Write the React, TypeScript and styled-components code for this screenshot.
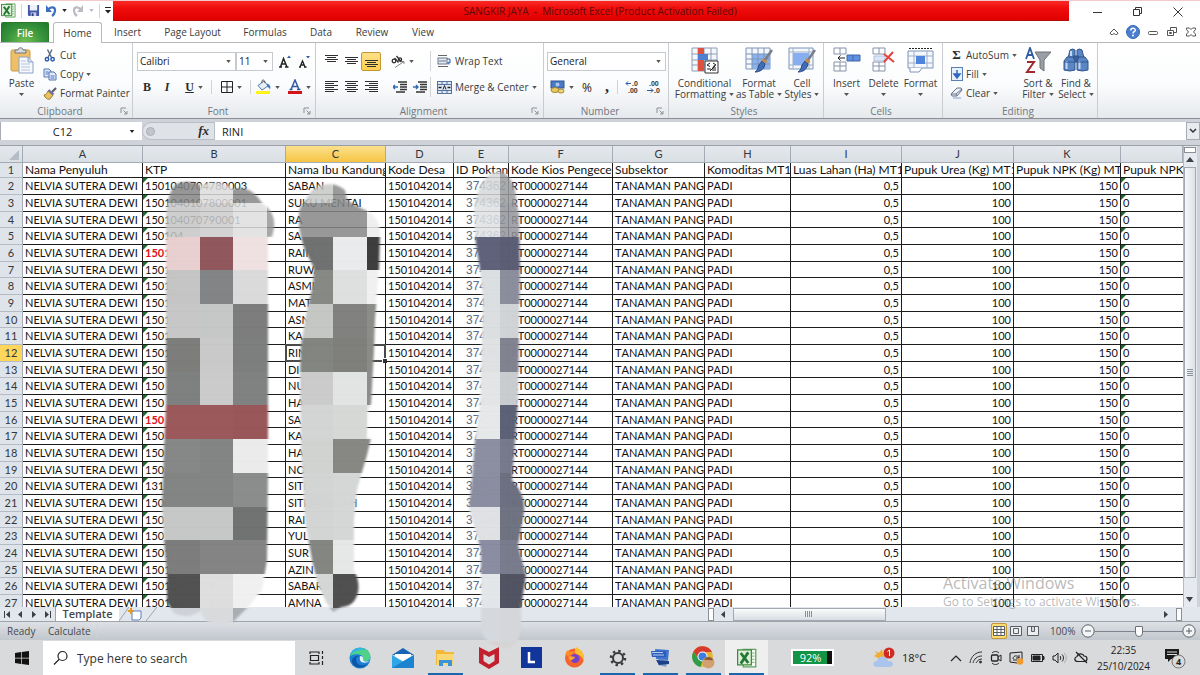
import React from 'react';
import styled, { createGlobalStyle, css } from 'styled-components';

const ui = '"Open Sans", "Noto Sans", sans-serif';
const sheetFont = 'Lato, "Open Sans", sans-serif';

const Global = createGlobalStyle`
  * { box-sizing: border-box; }
  body { margin: 0; background: #fff; font-family: ${ui}; font-size: 10px; color: #3b3b3b; overflow: hidden; }
  button, input, select { font: inherit; color: inherit; margin: 0; padding: 0; border: 0; background: none; outline: none; }
  svg { display: block; flex: none; }
`;

const Page = styled.div`
  position: relative;
  display: flex;
  flex-direction: column;
  height: 100vh;
`;

/* ---------- Title bar ---------- */
const TitleBar = styled.header`
  display: flex;
  align-items: flex-start;
  height: 22px;
  background: #fff;
  border-top: 1px solid #f3c9cc;
`;
const QuickAccess = styled.div`
  display: flex;
  align-items: center;
  width: 113px;
  height: 19px;
  padding-left: 1px;
  gap: 5px;
`;
const IconButton = styled.button`
  display: flex;
  align-items: center;
  justify-content: center;
  flex: none;
`;
const Title = styled.div`
  flex: 1;
  height: 20px;
  line-height: 20px;
  text-align: center;
  white-space: pre;
  color: #5c0a0a;
  padding-left: 18px;
  background: linear-gradient(#fb2a26, #ee0d0b 40%, #e00000);
  border-bottom: 1px solid #b40d0d;
`;
const WindowButtons = styled.div`
  display: flex;
  align-items: center;
  height: 22px;
  width: 131px;
  padding-left: 9px;
`;
const WindowButton = styled(IconButton)`
  width: 40px;
  height: 22px;
`;

/* ---------- Ribbon tabs ---------- */
const TabRow = styled.nav`
  display: flex;
  align-items: stretch;
  height: 21px;
  border-bottom: 1px solid #b6babf;
`;
const FileTab = styled.button`
  width: 48px;
  && {
    margin-left: 1px;
    border-radius: 2px 2px 0 0;
    border: 1px solid #2a7a2c;
    border-bottom: 0;
    color: #fff;
    font-weight: 600;
    background: radial-gradient(ellipse at 50% 100%, #6fc04f, #35913a 60%, #1e7a2c);
  }
`;
const Tab = styled.button<{ $w: number; $active?: boolean }>`
  width: ${p => p.$w}px;
  ${p => p.$active && css`
    && {
      margin: 0 0 -1px 4px;
      background: #fff;
      border: 1px solid #b6babf;
      border-bottom: 0;
      border-radius: 3px 3px 0 0;
    }
  `}
`;
const TabTools = styled.div`
  display: flex;
  align-items: center;
  gap: 7px;
  margin-left: auto;
  padding-right: 3px;
`;

/* ---------- Ribbon ---------- */
const Ribbon = styled.section`
  display: flex;
  height: 76px;
  background: linear-gradient(#fff, #fbfcfd 55%, #e6e9ed);
  border-bottom: 1px solid #8b9097;
`;
const Group = styled.div<{ $w: number }>`
  display: flex;
  flex-direction: column;
  width: ${p => p.$w}px;
  height: 75px;
  border-right: 1px solid #c9cdd2;
`;
const GroupBody = styled.div<{ $gap?: number; $pad?: number }>`
  display: flex;
  flex: 1;
  gap: ${p => p.$gap ?? 0}px;
  padding-left: ${p => p.$pad ?? 0}px;
`;
const GroupLabel = styled.div`
  display: flex;
  align-items: center;
  height: 14px;
  line-height: 14px;
  color: #6f7780;
  padding-right: 4px;
  span { flex: 1; text-align: center; }
`;
const Stack = styled.div`
  display: flex;
  flex-direction: column;
  gap: 3px;
  padding-top: 4px;
`;
const Lines = styled.div`
  display: flex;
  flex-direction: column;
  gap: 6px;
  padding-top: 8px;
`;
const Line = styled.div<{ $gap?: number }>`
  display: flex;
  align-items: center;
  height: 20px;
  gap: ${p => p.$gap ?? 0}px;
`;
const SmallButton = styled.button`
  display: flex;
  align-items: center;
  height: 16px;
  gap: 3px;
  white-space: nowrap;
`;
const Slot = styled.span<{ $w: number }>`
  display: flex;
  justify-content: center;
  width: ${p => p.$w}px;
`;
const BigButton = styled.button<{ $w: number }>`
  display: flex;
  flex-direction: column;
  align-items: center;
  width: ${p => p.$w}px;
  && { padding-top: 4px; line-height: 11px; }
  white-space: nowrap;
  svg + span { margin-top: 4px; }
`;
const Row = styled.span`
  display: flex;
  align-items: center;
  gap: 3px;
`;
const Tool = styled.button<{ $w?: number; $on?: boolean; $at?: 'top' | 'bottom' }>`
  display: flex;
  align-items: ${p => (p.$at === 'top' ? 'flex-start' : p.$at === 'bottom' ? 'flex-end' : 'center')};
  justify-content: center;
  gap: 4px;
  width: ${p => p.$w ?? 20}px;
  height: 19px;
  && { padding: ${p => (p.$at ? '3px 0 2px' : '0')}; }
  ${p => p.$on && css`
    && {
      border: 1px solid #c2972f;
      border-radius: 2px;
      background: linear-gradient(#fbe08a, #fdd052);
    }
  `}
`;
const Gap = styled.span`
  width: 9px;
`;
const VRule = styled.span<{ $h?: number }>`
  width: 1px;
  height: ${p => p.$h ?? 14}px;
  background: #d0d3d7;
`;
const SelectBox = styled.label<{ $w: number }>`
  position: relative;
  display: flex;
  align-items: center;
  width: ${p => p.$w}px;
  height: 19px;
  border: 1px solid #c6c9ce;
  background: #fff;
  select { appearance: none; width: 100%; height: 17px; padding-left: 2px; color: #222; }
  svg { position: absolute; right: 4px; pointer-events: none; }
`;
const Glyph = styled.span<{ $size?: number; $i?: boolean; $u?: boolean }>`
  font-family: "Liberation Serif", serif;
  font-size: ${p => p.$size ?? 12}px;
  line-height: 14px;
  color: #2b2b2b;
  font-weight: 700;
  font-style: ${p => (p.$i ? 'italic' : 'normal')};
  text-decoration: ${p => (p.$u ? 'underline' : 'none')};
`;
const Percent = styled.span`
  font-size: 12px;
  color: #222;
`;

/* ---------- Formula bar ---------- */
const FormulaBar = styled.section`
  display: flex;
  height: 26px;
  padding: 3px 0 5px;
  background: #cfd3d9;
  font-size: 11px;
`;
const NameBox = styled.label`
  position: relative;
  display: flex;
  align-items: center;
  width: 142px;
  background: #fff;
  border-left: 1px solid #a8adb4;
  input { width: 123px; text-align: center; color: #222; height: 17px; }
  svg { position: absolute; right: 7px; }
`;
const FxZone = styled.div`
  display: flex;
  align-items: center;
  justify-content: space-between;
  width: 73px;
  padding: 0 5px 0 3px;
  background: #dfe2e7;
  border: 1px solid #b9bdc4;
  border-radius: 9px 0 0 9px;
`;
const FormulaInput = styled.input`
  flex: 1;
  min-width: 0;
  height: 18px;
  && { background: #fff; color: #222; padding-left: 7px; }
`;
const Expand = styled(IconButton)`
  && { width: 14px; border: 1px solid #a8adb4; background: #e8ebef; }
`;

/* ---------- Sheet ---------- */
const SheetArea = styled.main`
  display: flex;
  flex: 1;
  min-height: 0;
  border-top: 1px solid #9a9ea5;
  background: #dfe3e8;
`;
const GridClip = styled.div`
  flex: 1;
  min-width: 0;
  overflow: hidden;
  background: #fff;
`;
const Grid = styled.table`
  width: 100%;
  table-layout: fixed;
  border-collapse: separate;
  border-spacing: 0;
  font-family: ${sheetFont};
  font-size: 11px;
  line-height: 14px;
  color: #111;
`;
const ColHead = styled.th<{ $on?: boolean }>`
  height: 17px;
  padding: 0;
  font-weight: 400;
  color: #33373c;
  border-right: 1px solid #a3abb5;
  border-bottom: 1px solid #a3abb5;
  background: ${p => (p.$on ? 'linear-gradient(#fbe08c, #f6c544)' : 'linear-gradient(#e4e8ed, #dadfe5)')};
`;
const Corner = styled(ColHead)`
  svg { margin: 2px 3px 0 auto; }
`;
const RowHead = styled.th<{ $on?: boolean }>`
  padding: 0;
  font-weight: 400;
  color: #33373c;
  background: ${p => (p.$on ? '#ffd65c' : '#dfe4ea')};
  border-right: 1px solid #a3abb5;
  border-bottom: 1px solid #b4bbc4;
`;
const GridRow = styled.tr`
  height: 17px;
  &:nth-child(3n + 1) { height: 16px; }
  &:first-child { height: 15px; }
`;
const Cell = styled.td<{ $right?: boolean; $flag?: boolean; $red?: boolean; $code?: boolean; $open?: boolean; $big?: boolean; $loose?: boolean }>`
  position: relative;
  padding: 0 2px;
  white-space: nowrap;
  overflow: hidden;
  text-align: ${p => (p.$right ? 'right' : 'left')};
  border-right: ${p => (p.$open ? '0' : '1px solid #1c1c1c')};
  border-bottom: 1px solid #1c1c1c;
  ${p => p.$big && css`font-size: 12px;`}
  ${p => p.$loose && css`font-kerning: none;`}
  ${p => p.$flag && css`background: linear-gradient(135deg, #1a6b2b 3px, transparent 4px);`}
  ${p => p.$red && css`color: #e01020; font-weight: 700;`}
  ${p => p.$code && css`font-family: "Liberation Sans", sans-serif; font-size: 12px; color: #5b6a83;`}
`;
const ActiveCell = styled(Cell)`
  overflow: visible;
  &::before { content: ''; position: absolute; inset: -1px; border: 2px solid #4a4a4a; }
  &::after { content: ''; position: absolute; right: -3px; bottom: -3px; width: 4px; height: 4px; background: #333; border: 1px solid #fff; }
`;
const VScroll = styled.div`
  display: flex;
  flex-direction: column;
  align-items: center;
  width: 17px;
  padding: 1px 2px 4px 0;
  border-left: 1px solid #b4bac2;
  border-right: 3px solid #cfd3d9;
  background: #e6eaf0;
`;
const SplitHandle = styled.span<{ $v?: boolean }>`
  width: ${p => (p.$v ? 6 : 12)}px;
  height: ${p => (p.$v ? 13 : 6)}px;
  border: 1px solid #8b9097;
  background: #fff;
  flex: none;
`;
const VThumb = styled.div`
  display: flex;
  align-items: center;
  justify-content: center;
  flex: 1;
  width: 12px;
  margin-bottom: 18px;
  border: 1px solid #a3a9b2;
  background: linear-gradient(90deg, #f6f8fa, #dde1e7);
`;

/* ---------- Sheet tabs ---------- */
const SheetTabs = styled.div`
  display: flex;
  align-items: center;
  height: 15px;
  background: #e2e7ee;
  border-bottom: 1px solid #9fa4ab;
`;
const NavButtons = styled.div`
  display: flex;
  align-items: center;
  justify-content: space-between;
  width: 55px;
  padding: 0 4px;
`;
const SheetTab = styled.button`
  && {
    width: 64px;
    height: 14px;
    line-height: 14px;
    background: #fff;
    border-left: 1px solid #9fa4ab;
    font-weight: 600;
    font-size: 11px;
    color: #45494e;
  }
`;
const HScroll = styled.div`
  display: flex;
  align-items: center;
  gap: 6px;
  margin-left: auto;
  width: 41%;
  padding-right: 18px;
`;
const HTrack = styled.div`
  display: flex;
  flex: 1;
  height: 13px;
`;
const HThumb = styled.div`
  display: flex;
  align-items: center;
  justify-content: center;
  width: 36%;
  border: 1px solid #a3a9b2;
  background: linear-gradient(#fafbfc, #d9dde3);
`;

/* ---------- Status bar ---------- */
const StatusBar = styled.footer`
  display: flex;
  align-items: center;
  height: 18px;
  padding-left: 7px;
  background: linear-gradient(#dde1e6, #c2c7cd);
  color: #45494e;
`;
const StatusItem = styled.span<{ $w: number }>`
  width: ${p => p.$w}px;
`;
const ViewTools = styled.div`
  display: flex;
  align-items: center;
  gap: 1px;
  margin-left: auto;
`;
const ViewButton = styled.button<{ $on?: boolean }>`
  && {
    display: flex;
    align-items: center;
    justify-content: center;
    width: 16px;
    height: 16px;
    border-radius: 2px;
    ${p => p.$on && css`border: 1px solid #c2972f; background: #fddc74;`}
  }
`;
const Zoom = styled.label`
  display: flex;
  align-items: center;
  margin-left: 8px;
  padding-right: 4px;
  span { width: 31px; }
`;
const ZoomRange = styled.input`
  appearance: none;
  width: 87px;
  height: 14px;
  && { background: linear-gradient(#7e848b, #7e848b) center / 100% 1px no-repeat; }
  &::-webkit-slider-thumb {
    appearance: none;
    width: 8px;
    height: 11px;
    border: 1px solid #6a7078;
    border-radius: 1px 1px 4px 4px;
    background: #fff;
  }
`;

/* ---------- Task bar ---------- */
const TaskBar = styled.footer`
  display: flex;
  align-items: stretch;
  height: 35px;
  background: #d9dadb;
  color: #222;
`;
const StartButton = styled(IconButton)`
  width: 43px;
`;
const SearchBox = styled.label`
  display: flex;
  align-items: center;
  gap: 8px;
  width: 252px;
  margin-top: 1px;
  padding-left: 10px;
  background: #fff;
  font-size: 12px;
  input { width: 180px; }
  input::placeholder { color: #333; opacity: 1; }
`;
const TaskButton = styled.button<{ $open?: boolean; $active?: boolean }>`
  && {
    position: relative;
    display: flex;
    align-items: center;
    justify-content: center;
    width: 43px;
    background: ${p => (p.$active ? '#efefef' : 'transparent')};
  }
  ${p => p.$open && css`
    &::after { content: ''; position: absolute; left: 4px; right: 4px; bottom: 0; height: 2px; background: #1d66ad; }
  `}
`;
const Battery = styled.div`
  align-self: center;
  width: 43px;
  height: 17px;
  margin-left: 23px;
  padding: 0 4px 0 0;
  font-size: 11px;
  line-height: 13px;
  border: 2px solid #fff;
  background: linear-gradient(90deg, #129447 34px, #111 34px);
  color: #fff;
  text-align: center;
`;
const Tray = styled.div`
  display: flex;
  align-items: center;
  margin-left: auto;
  padding-right: 14px;
`;
const Weather = styled.button`
  && {
    display: flex;
    align-items: center;
    gap: 6px;
    width: 78px;
    font-size: 11px;
    white-space: nowrap;
  }
`;
const TrayIcons = styled.div`
  display: flex;
  align-items: center;
  gap: 7px;
  margin-right: 8px;
`;
const Clock = styled.div`
  display: flex;
  flex-direction: column;
  align-items: center;
  width: 53px;
  line-height: 16px;
  margin-right: 14px;
`;

/* ---------- Overlays ---------- */
const Watermark = styled.div`
  position: absolute;
  right: 49px;
  bottom: 64px;
  width: 208px;
  color: rgba(140, 140, 140, 0.62);
  white-space: nowrap;
  pointer-events: none;
  font-size: 12px;
  line-height: 18px;
  strong { display: block; font-weight: 400; font-size: 16px; line-height: 20px; }
`;
const Censor = styled.svg`
  position: absolute;
  left: 0;
  top: 0;
  pointer-events: none;
`;

/* ---------- Icons ---------- */
const Caret = ({ c = '#555', s = 5 }: { c?: string; s?: number }) => (
  <svg width={s} height="3" viewBox="0 0 6 4"><path d="M0 0h6L3 4z" fill={c} /></svg>
);
const Drop = () => <svg width="5" height="9"><path d="M0 4h5L2.500 7z" fill="#555" /></svg>;
const Launcher = () => (
  <svg width="8" height="8" viewBox="0 0 8 8" fill="none" stroke="#8b9097"><path d="M1 6V1h5M3.500 3.500 7 7M7 4v3H4" /></svg>
);
const ExcelIcon = ({ s = 15 }: { s?: number }) => (
  <svg width={s} height={s} viewBox="0 0 16 16">
    <path d="M5 1h10v14H5z" fill="#f6fbf3" stroke="#5fa35c" />
    <path d="M10 4h4M10 6.500h4M10 9h4M10 11.500h4" stroke="#8cc48a" fill="none" />
    <rect x=".5" y="1.500" width="11" height="12" fill="#dff0d8" stroke="#3c8a3f" />
    <path d="M3 4l6 8M9 3.500L3 12.500" stroke="#237a34" strokeWidth="2.200" />
  </svg>
);
const SaveIcon = () => (
  <svg width="13" height="13" viewBox="0 0 14 14">
    <path d="M1 1h12v12H2L1 12z" fill="#4257a8" /><rect x="3" y="1" width="8" height="6" fill="#eef1fa" />
    <rect x="4" y="9" width="6" height="4" fill="#c7cde6" /><rect x="5" y="10" width="2" height="3" fill="#2a3978" />
  </svg>
);
const UndoIcon = ({ c, flip }: { c: string; flip?: boolean }) => (
  <svg width="12" height="13" viewBox="0 0 12 13"><g transform={flip ? 'matrix(-1 0 0 1 12 0)' : undefined}>
    <path d="M3 5.500C6 2 10.500 3 10 7c-.3 2.500-1.500 4-3 5" fill="none" stroke={c} strokeWidth="2.200" />
    <path d="M1 1v7h6z" fill={c} /></g>
  </svg>
);
const PasteIcon = () => (
  <svg width="24" height="27" viewBox="0 0 24 27">
    <rect x="1" y="3" width="19" height="21" rx="1.500" fill="#eebf66" stroke="#c9994a" />
    <path d="M5 3h3c0-3 5-3 5 0h3v3H5z" fill="#d7dade" stroke="#72777e" />
    <path d="M9 10h9l5 5v11H9z" fill="#f5f8fd" stroke="#8fa3c4" /><path d="M18 10v5h5" fill="#cfdcef" stroke="#8fa3c4" />
    <path d="M11 14h5M11 17h9M11 20h9M11 23h9" stroke="#b4c3dc" />
  </svg>
);
const CutIcon = () => (
  <svg width="12" height="13" viewBox="0 0 12 13" fill="none">
    <path d="M3.500.5l4 8M8 .5l-4 8" stroke="#5f6a7a" strokeWidth="1.400" />
    <circle cx="3" cy="10.300" r="1.700" stroke="#2f5fb0" strokeWidth="1.500" /><circle cx="8.600" cy="10.300" r="1.700" stroke="#2f5fb0" strokeWidth="1.500" />
  </svg>
);
const CopyIcon = () => (
  <svg width="14" height="13" viewBox="0 0 14 13" stroke="#5577b5" fill="#dfeafb">
    <path d="M1 1h5l2 2v6H1z" /><path d="M6 4h5l2 2v6H6z" /><path d="M2.500 4h3M2.500 6h3M7.500 8h4M7.500 10h4" />
  </svg>
);
const BrushIcon = () => (
  <svg width="14" height="13" viewBox="0 0 14 13">
    <path d="M13 1L9 5" stroke="#5c5c6a" strokeWidth="2.200" /><path d="M5 4l5 4-3 4c-2 1-5-1-6-4 2 0 3-2 4-4z" fill="#e9c25e" stroke="#9a7a2c" /><path d="M5.500 3l5 4.500" stroke="#6a6fa0" strokeWidth="2.200" />
  </svg>
);
const BordersIcon = () => (
  <svg width="12" height="12" viewBox="0 0 12 12" fill="none" stroke="#222"><path d="M.5.5h11v11H.5zM6 0v12M0 6h12" /></svg>
);
const FillColor = () => (
  <svg width="15" height="16" viewBox="0 0 15 16">
    <path d="M2 6.500l6-4.500 4 5-6 4z" fill="#e8eef8" stroke="#5577a8" /><path d="M6 4C5 0 9 0 9 4" fill="none" stroke="#555" /><path d="M11 4.500c3 1 4 3 3 6-1-2-2-2.500-3-3z" fill="#3a76c4" />
    <rect x="0" y="12" width="14" height="3" fill="#fdf21a" />
  </svg>
);
const FontColor = () => (
  <svg width="14" height="16" viewBox="0 0 14 16"><path d="M3 10.500L7 1l4 9.500M4.500 7.500h5M1.500 10.500h3M9 10.500h3.500" fill="none" stroke="#2f5ba3" strokeWidth="1.500" /><rect x="0" y="12" width="14" height="3" fill="#d51217" /></svg>
);
const AlignIcon = ({ kind }: { kind: 'left' | 'center' | 'right' | 'v' }) => {
  const n = kind === 'v' ? [0, 1, 0, 1] : [0, 1, 0, 1, 0, 1];
  return (
    <svg width="13" height={n.length * 2} viewBox={`0 0 13 ${n.length * 2}`} stroke="#2f2f2f">
      {n.map((short, i) => {
        const a = short ? (kind === 'left' ? 0 : kind === 'right' ? 4 : 2) : 0;
        const b = short ? (kind === 'left' ? 9 : kind === 'right' ? 13 : 11) : 13;
        return <path key={i} d={`M${a} ${i * 2 + 0.5}H${b}`} />;
      })}
    </svg>
  );
};
const IndentIcon = ({ flip }: { flip?: boolean }) => (
  <svg width="14" height="12" viewBox="0 0 14 12" fill="none">
    <path d="M5 1h9M7 3.500h7M7 6h7M7 8.500h7M3 11h9" stroke="#333" strokeWidth="1.300" />
    <path d={flip ? 'M0 6h5M3 4l2 2-2 2' : 'M5 6H0M2 4L0 6l2 2'} stroke="#2f6bb5" strokeWidth="1.400" />
  </svg>
);
const OrientIcon = () => (
  <svg width="14" height="13" viewBox="0 0 14 13" fill="none" stroke="#333" strokeWidth="1.300"><circle cx="3" cy="6" r="1.800" /><path d="M3.500 3l4 4.500M5.500 1l5 6" /><circle cx="9" cy="4.500" r="1.600" /><path d="M4 12.500l9-6M10.500 6.500H13V9" stroke="#888" strokeWidth="1" /></svg>
);
const WrapIcon = () => (
  <svg width="15" height="14" viewBox="0 0 15 14" fill="none"><path d="M1 1.500h9M1 12.500h10" stroke="#666" /><rect x="1" y="4" width="9" height="6" fill="#e4eaf2" stroke="#6b7788" /><path d="M2 7h7" stroke="#6b7788" /><path d="M10 5h3v4h-2M12 7.500L10.500 9 12 10.500" stroke="#2f5ba3" /></svg>
);
const MergeIcon = () => (
  <svg width="15" height="13" viewBox="0 0 15 13"><rect x=".5" y=".5" width="14" height="12" fill="#dfe9f7" stroke="#56739d" /><path d="M1 3.500h13M1 9.500h13M5 1v2M10 1v2M5 10v2M10 10v2" stroke="#56739d" /><path d="M1.500 6.500h3M13.500 6.500h-3" stroke="#222" strokeWidth="1.500" /><path d="M6 8.500l1.500-4L9 8.500" fill="none" stroke="#222" /></svg>
);
const MoneyIcon = () => (
  <svg width="15" height="14" viewBox="0 0 15 14"><rect x="1" y="1" width="13" height="7" fill="#4a79c4" stroke="#2f5596" /><circle cx="7.500" cy="4.500" r="2" fill="#a8c5ef" /><ellipse cx="5" cy="10" rx="4" ry="2.500" fill="#e9cb62" stroke="#a6842c" /><ellipse cx="11" cy="11" rx="3" ry="2" fill="#f0d77d" stroke="#a6842c" /></svg>
);
const DecimalIcon = ({ more }: { more?: boolean }) => (
  <svg width="14" height="14" viewBox="0 0 14 14" fontFamily="Liberation Sans, sans-serif" fontWeight="700" fontSize="7" fill="#333">
    <text x={more ? 7 : 2} y="6">{more ? '.0' : '.00'}</text><text x={more ? 3 : 7} y="13">{more ? '.00' : '.0'}</text>
    <path d={more ? 'M6 3.500H1M3 1.500L1 3.500l2 2' : 'M0 10.500h6M4 8.500l2 2-2 2'} stroke="#2f5ba3" fill="none" />
  </svg>
);
const Canvas = ({ children }: { children: React.ReactNode }) => (
  <svg width="28" height="27" viewBox="0 0 28 27" fill="none">{children}</svg>
);
const CondIcon = () => (
  <Canvas>
    <path d="M1 1h25v23H1z" fill="#f4f7fb" stroke="#8e9db3" /><path d="M7 1v23M13 1v23M20 1v23M1 7h25M1 13h25M1 18h25" stroke="#8e9db3" />
    <path d="M7 1h6v6H7zM7 13h6v11H7z" fill="#e0503f" /><path d="M7 7h10v6H7z" fill="#4e7fd0" />
    <path d="M14 14h13v12H14z" fill="#fff" stroke="#333" /><path d="M19 16l-3 2 3 1.500M16 22h4M22 16l3 2-3 1.500M21 21h4M21 23h4M24 19l-5 5" stroke="#222" />
  </Canvas>
);
const Brush = () => (
  <g><path d="M27 3L20 13" stroke="#787e88" strokeWidth="2.600" /><path d="M17 14l3 3-1 3c-2 4-6 5-9 5 3-2 3-4 4-7z" fill="#3f6db8" stroke="#2b4b83" /><path d="M17.500 12.500l4 3" stroke="#c08a4c" strokeWidth="3" /></g>
);
const TableIcon = () => (
  <Canvas><path d="M1 1h24v21H1z" fill="#f4f7fb" stroke="#7d94b8" /><path d="M7 7h18v15H7z" fill="#8bb2ef" /><path d="M7 1v21M13 1v21M19 1v21M1 7h24M1 12h24M1 17h24" stroke="#7d94b8" /><Brush /></Canvas>
);
const StylesIcon = () => (
  <Canvas><path d="M1 1h24v21H1z" fill="#f4f7fb" stroke="#7d94b8" /><path d="M5 1v21M21 1v21M1 5h24M1 18h24" stroke="#9fb0ca" /><path d="M5 6h16v12H5z" fill="#86aef0" /><Brush /></Canvas>
);
const InsertIcon = () => (
  <Canvas><path d="M1 1h12v6H1zM7 1v6M1 15h12v9H1zM7 15v9M1 19h12" fill="#fff" stroke="#8492a8" /><path d="M14 8h13v6H14z" fill="#5e8fe0" stroke="#3f66a8" /><path d="M20 8v6" stroke="#3f66a8" /><path d="M12 11H5M7.500 8.500L5 11l2.500 2.500" stroke="#222" /></Canvas>
);
const DeleteIcon = () => (
  <Canvas><path d="M3 1h12v6H3zM9 1v6M3 15h12v9H3zM9 15v9M3 19h12" fill="#fff" stroke="#8492a8" /><path d="M4 9h11v5H4z" fill="#dbe6f8" stroke="#b2c2dd" /><path d="M14 7l10 8M23 5l-9 10" stroke="#e2433d" strokeWidth="2" /></Canvas>
);
const FormatIcon = () => (
  <Canvas><path d="M2 1.500h23" stroke="#222" strokeDasharray="2 1" /><path d="M1 4h25v17H1z" fill="#f4f7fb" stroke="#7d94b8" /><path d="M7 4v17M20 4v17M1 9h25M1 16h25" stroke="#9fb0ca" /><path d="M9 9h9v8H9z" fill="#4f84dd" /><path d="M3 21v4h9l3-4" stroke="#7d94b8" fill="#fff" /></Canvas>
);
const FillIcon = () => (
  <svg width="12" height="14" viewBox="0 0 12 14"><rect x=".5" y=".5" width="11" height="13" fill="#e8f0fc" stroke="#5a7fb8" /><path d="M6 3v6M3 7l3 4 3-4z" stroke="#2f67c0" fill="#2f67c0" strokeWidth="1.500" /></svg>
);
const EraserIcon = () => (
  <svg width="13" height="12" viewBox="0 0 13 12"><path d="M7 1h4l1 2-5 6H2L1 7z" fill="#eef2f8" stroke="#66738a" /><path d="M1 7h5l6-5M6 7l1 2" fill="none" stroke="#66738a" /><path d="M3 11h8" stroke="#7da0d6" /></svg>
);
const SortIcon = () => (
  <svg width="26" height="27" viewBox="0 0 26 27" fill="none"><path d="M10 5h16l-7 8v11l-4-3v-8z" fill="#9a9fa6" stroke="#6d7279" /><path d="M1 12L5 1l4 11M2.500 8h5" stroke="#2f5ba3" strokeWidth="1.800" /><path d="M2 15h7L2 25h8" stroke="#9c2b30" strokeWidth="2" /></svg>
);
const FindIcon = () => (
  <svg width="26" height="27" viewBox="0 0 26 27" fill="#5a86c4" stroke="#2f5590">
    <path d="M7 3q2.500-2 5 0v8H5z" /><path d="M14 3q2.500-2 5 0l2 8h-7z" />
    <path d="M10.500 9h5v6h-5z" fill="#3a5f96" />
    <path d="M1 14l3-4h6l2 4v9q-5 2-11 0z" /><path d="M14 14l2-4h6l3 4v9q-6 2-11 0z" />
    <path d="M3.500 14v8M16.500 14v8M8 4v5" stroke="#c3d8f4" strokeWidth="2" />
    <path d="M1 15h11M14 15h11" stroke="#2f5590" />
  </svg>
);
const Tri = ({ d }: { d: string }) => <svg width="7" height="7" viewBox="0 0 7 7"><path d={d} fill="#3c4046" /></svg>;

/* ---------- Data ---------- */
const columns: [string, number | undefined][] = [
  ['A', 120], ['B', 143], ['C', 100], ['D', 68], ['E', 55], ['F', 104],
  ['G', 92], ['H', 86], ['I', 111], ['J', 112], ['K', 107], ['', undefined],
];
const headings = ['Nama Penyuluh', 'KTP', 'Nama Ibu Kandung', 'Kode Desa', 'ID Poktan', 'Kode Kios Pengecer', 'Subsektor', 'Komoditas MT1', 'Luas Lahan (Ha) MT1', 'Pupuk Urea (Kg) MT1', 'Pupuk NPK (Kg) MT1', 'Pupuk NPK'];
const people: [string, string][] = [
  ['1501040704780003', 'SABAN'], ['1501040107800001', 'SUKU MENTAI'], ['150104070790001', 'RA'], ['150104', 'SA'],
  ['1501', 'RAIN'], ['1501', 'RUWA'], ['1501', 'ASMI'], ['1501', 'MAT'], ['1501', 'ASN'], ['1501', 'KA'],
  ['1501', 'RINI'], ['150', 'DI'], ['150', 'NU'], ['150', 'HA'], ['150', 'SA'], ['150', 'KA'], ['150', 'HA'],
  ['150', 'NO'], ['131', 'SITI'], ['150', 'SITI FATIMAH'], ['150', 'RAI'], ['150', 'YUL'], ['1501', 'SUR'],
  ['1501', 'AZIN'], ['15010401019', 'SABARIAH'], ['1501040107650009', 'AMNA'],
];

/* Mosaic tiles: one row of colours per 34px band, starting at y=169. */
const strokes = [
  {
    id: 'b',
    x: [150, 200, 233, 267, 280],
    path: 'M176 184Q188 179 200 185Q218 178 234 189Q250 184 262 203Q276 212 274 228L272 237H268V475L267 560L262 590L250 605L240 615L233 622Q218 628 205 620L200 611Q188 620 174 613L167 602V575L164 540L162 506L164 450L166 405V230Q165 195 176 184Z',
    tiles: [
      ['#858585', '#dcdcdc', '#868686', '#999'], ['#c6c6c6', '#cbcbcb', '#dedede', '#989898'], ['#e8cfcf', '#8f565a', '#efe1e2', '#efe1e2'],
      ['#c4c4c4', '#828384', '#dadada', '#dadada'], ['#c6c6c6', '#c5c6c6', '#7b7b7b', '#7b7b7b'], ['#7b7b7a', '#c8c8c8', '#7b7c7c', '#7b7c7c'],
      ['#7d7e7e', '#cacaca', '#7e7f7f', '#7e7f7f'], ['#9b5759', '#9b5759', '#985558', '#985558'], ['#858686', '#828383', '#ebebeb', '#ebebeb'],
      ['#828383', '#828383', '#8a8b8b', '#8a8b8b'], ['#c5c7c6', '#c5c7c6', '#6f7070', '#6f7070'], ['#7a7b7a', '#838383', '#838383', '#838383'],
      ['#505050', '#dedede', '#f0f0f0', '#f0f0f0'], ['#cdd0d4', '#d8dadc', '#a9adb3', '#a9adb3'],
    ],
  },
  {
    id: 'c',
    x: [290, 333, 367, 390],
    path: 'M312 190Q330 178 345 190L347 200L357 206L367 211Q378 216 380 230L379 268L375 320L374 350L371 405L368 410L367 438H371L367 455L362 472L357 490L354 520V570Q360 582 358 592Q355 606 342 607L333 612L326 602L318 585L312 560L305 520L301 450L300 375L301 345L306 315L313 285L314 268L305 250Q296 225 300 208Z',
    tiles: [
      ['#c6c8c5', '#8a8a8a', '#eee'], ['#858685', '#868686', '#ececec'], ['#6e6f6f', '#e9ebec', '#3c3c3c'],
      ['#858883', '#dedfdf', '#f0f0f0'], ['#c3c6c3', '#7f817d', '#8a8c88'], ['#82847f', '#7d7e79', '#888a85'],
      ['#c9cac9', '#e2e3e3', '#8b8b8b'], ['#d2d3d3', '#d5d8d5', '#e5e5e5'], ['#d0d2d0', '#868782', '#868782'],
      ['#d2d4d3', '#d5d7d6', '#ddd'], ['#d2d5d4', '#d5d7d6', '#ddd'], ['#838581', '#e6e8e7', '#ddd'],
      ['#d5d7d6', '#4e4e4e', '#4e4e4e'], ['#a9adb3', '#a9adb3', '#a9adb3'],
    ],
  },
  {
    id: 'e',
    x: [460, 500, 533],
    path: 'M480 186Q488 172 500 171Q516 178 516 200L519 215L520 270L518 400L515 440L512 480Q526 495 524 512L518 545L526 575L521 607V630Q518 648 504 648Q484 644 481 630V550L469 508L472 480L475 440L480 405L483 300L480 270L475 236L474 205Z',
    tiles: [
      ['#d5d7d8', '#9a9b9e'], ['#dfe1e3', '#93949a'], ['#5d6078', '#595c73'], ['#dcdfe1', '#8a8d9c'], ['#dcdfe1', '#d0d3d6'],
      ['#dfe1e3', '#7f828f'], ['#e3e5e6', '#c9ccce'], ['#e6e8e9', '#5c6074'], ['#8b8ea0', '#74788a'], ['#8a8da0', '#6b6e7e'],
      ['#dfe1e4', '#6e7180'], ['#8a8da1', '#777a8b'], ['#e3e7ea', '#505261'], ['#d5d8dc', '#d3d6da'], ['#d8cfd0', '#d5d5d6'],
    ],
  },
];
const bandTop = (i: number) => 169 + Math.round(i * 33.75);

const App = () => (
  <Page>
    <Global />
    <TitleBar>
      <QuickAccess>
        <ExcelIcon />
        <VRule />
        <IconButton aria-label="Save"><SaveIcon /></IconButton>
        <IconButton aria-label="Undo"><UndoIcon c="#3f6fc0" /></IconButton>
        <Caret c="#222" />
        <IconButton aria-label="Redo"><UndoIcon c="#b9bcc0" flip /></IconButton>
        <Caret c="#b9bcc0" />
        <VRule />
        <IconButton aria-label="Customize toolbar"><svg width="6" height="7" viewBox="0 0 6 7"><path d="M0 .5h6" stroke="#222" /><path d="M0 3h6L3 6.500z" fill="#222" /></svg></IconButton>
      </QuickAccess>
      <Title>{'SANGKIR JAYA  -  Microsoft Excel (Product Activation Failed)'}</Title>
      <WindowButtons>
        <WindowButton aria-label="Minimize"><svg width="10" height="10" stroke="#333"><path d="M0 5.500h9" /></svg></WindowButton>
        <WindowButton aria-label="Restore"><svg width="10" height="10" fill="none" stroke="#333"><path d="M.5 2.500h6v6h-6zM2.500 2.500v-2h6v6h-2" /></svg></WindowButton>
        <WindowButton aria-label="Close"><svg width="10" height="10" stroke="#333"><path d="M.5.5l9 9M9.500.5l-9 9" /></svg></WindowButton>
      </WindowButtons>
    </TitleBar>

    <TabRow>
      <FileTab>File</FileTab>
      <Tab $w={49} $active>Home</Tab>
      <Tab $w={51}>Insert</Tab>
      <Tab $w={79}>Page Layout</Tab>
      <Tab $w={66}>Formulas</Tab>
      <Tab $w={46}>Data</Tab>
      <Tab $w={56}>Review</Tab>
      <Tab $w={46}>View</Tab>
      <TabTools>
        <IconButton aria-label="Collapse ribbon"><svg width="10" height="8" fill="none" stroke="#555"><path d="M1 5l4-4 4 4-1 1.500H6.500L5 5.500 3.500 6.500H2z" /></svg></IconButton>
        <IconButton aria-label="Help">
          <svg width="14" height="14" viewBox="0 0 14 14"><circle cx="7" cy="7" r="6.500" fill="#4a7fd0" stroke="#3566b4" /><path d="M4.800 5.500c0-3 4.500-2.800 4.500-.3C9.300 6.800 7 6.700 7 8.500" fill="none" stroke="#fff" strokeWidth="1.500" /><circle cx="7" cy="10.500" r="1" fill="#fff" /></svg>
        </IconButton>
        <IconButton aria-label="Minimize workbook"><svg width="12" height="8" fill="none" stroke="#555"><rect x="1.500" y="3.500" width="9" height="3" rx="1" /></svg></IconButton>
        <IconButton aria-label="Restore workbook"><svg width="12" height="10" fill="none" stroke="#555"><path d="M4.500 3V.5h6v5H8M1.500 3.500h6v5h-6zM3.500 5.500h2v1h-2z" /></svg></IconButton>
        <IconButton aria-label="Close workbook"><svg width="12" height="10" fill="none" stroke="#555"><path d="M1.500 1h3L6 2.500 7.500 1h3v1.500L8.500 5l2 2v2h-3L6 7.500 4.500 9h-3V7l2-2-2-2.500z" /></svg></IconButton>
      </TabTools>
    </TabRow>

    <Ribbon>
      <Group $w={133}>
        <GroupBody>
          <BigButton $w={43}><PasteIcon /><span>Paste</span><Drop /></BigButton>
          <Stack>
            <SmallButton><Slot $w={14}><CutIcon /></Slot>Cut</SmallButton>
            <SmallButton><Slot $w={14}><CopyIcon /></Slot>Copy <Caret /></SmallButton>
            <SmallButton><Slot $w={14}><BrushIcon /></Slot>Format Painter</SmallButton>
          </Stack>
        </GroupBody>
        <GroupLabel><span>Clipboard</span><Launcher /></GroupLabel>
      </Group>
      <Group $w={183}>
        <GroupBody $pad={4}>
          <Lines>
            <Line>
              <SelectBox $w={99}><select aria-label="Font"><option>Calibri</option></select><Caret /></SelectBox>
              <SelectBox $w={37}><select aria-label="Font size"><option>11</option></select><Caret /></SelectBox>
              <Tool aria-label="Grow font" $w={22}>
                <svg width="13" height="13" viewBox="0 0 13 13"><path d="M1 12h3M7 12h3.500M2.500 12L5.500 3.500 9 12M4 9h4" fill="none" stroke="#222" strokeWidth="1.500" /><path d="M9 3h4L11 .5z" fill="#2f5ba3" /></svg>
              </Tool>
              <Tool aria-label="Shrink font" $w={18}>
                <svg width="12" height="13" viewBox="0 0 12 13"><path d="M1 12h2M6 12h2.500M2 12l2.500-6L7 12M3 10h3" fill="none" stroke="#222" strokeWidth="1.300" /><path d="M8 1h4l-2 2.500z" fill="#2f5ba3" /></svg>
              </Tool>
            </Line>
            <Line>
              <Tool aria-label="Bold"><Glyph>B</Glyph></Tool>
              <Tool aria-label="Italic"><Glyph $i>I</Glyph></Tool>
              <Tool aria-label="Underline" $w={34}><Glyph $u>U</Glyph><Caret /></Tool>
              <VRule />
              <Tool aria-label="Borders" $w={38}><BordersIcon /><Caret /></Tool>
              <VRule />
              <Tool aria-label="Fill color" $w={34}><FillColor /><Caret /></Tool>
              <Tool aria-label="Font color" $w={29}><FontColor /><Caret /></Tool>
            </Line>
          </Lines>
        </GroupBody>
        <GroupLabel><span>Font</span><Launcher /></GroupLabel>
      </Group>
      <Group $w={228}>
        <GroupBody $pad={5}>
          <Lines>
            <Line>
              <Tool aria-label="Top align" $at="top"><AlignIcon kind="v" /></Tool>
              <Tool aria-label="Middle align"><AlignIcon kind="v" /></Tool>
              <Tool aria-label="Bottom align" $on $at="bottom"><AlignIcon kind="v" /></Tool>
              <Gap />
              <Tool aria-label="Orientation" $w={24}><OrientIcon /><Caret /></Tool>
            </Line>
            <Line>
              <Tool aria-label="Align left"><AlignIcon kind="left" /></Tool>
              <Tool aria-label="Center"><AlignIcon kind="center" /></Tool>
              <Tool aria-label="Align right"><AlignIcon kind="right" /></Tool>
              <Gap />
              <Tool aria-label="Decrease indent"><IndentIcon /></Tool>
              <Tool aria-label="Increase indent"><IndentIcon flip /></Tool>
            </Line>
          </Lines>
          <Lines>
            <Line $gap={6}><VRule $h={20} /><SmallButton><WrapIcon />Wrap Text</SmallButton></Line>
            <Line $gap={6}><VRule $h={20} /><SmallButton><MergeIcon />Merge &amp; Center <Caret /></SmallButton></Line>
          </Lines>
        </GroupBody>
        <GroupLabel><span>Alignment</span><Launcher /></GroupLabel>
      </Group>
      <Group $w={125}>
        <GroupBody $pad={3}>
          <Lines>
            <Line><SelectBox $w={119}><select aria-label="Number format"><option>General</option></select><Caret /></SelectBox></Line>
            <Line>
              <Tool aria-label="Accounting format" $w={30}><MoneyIcon /><Caret /></Tool>
              <Tool aria-label="Percent"><Percent>%</Percent></Tool>
              <Tool aria-label="Comma"><Glyph $size={16}>,</Glyph></Tool>
              <VRule />
              <Tool aria-label="Increase decimal" $w={28}><DecimalIcon more /></Tool>
              <Tool aria-label="Decrease decimal" $w={16}><DecimalIcon /></Tool>
            </Line>
          </Lines>
        </GroupBody>
        <GroupLabel><span>Number</span><Launcher /></GroupLabel>
      </Group>
      <Group $w={155}>
        <GroupBody $pad={5}>
          <BigButton $w={61}><CondIcon /><span>Conditional</span><Row>Formatting <Caret /></Row></BigButton>
          <BigButton $w={48}><TableIcon /><span>Format</span><Row>as Table <Caret /></Row></BigButton>
          <BigButton $w={38}><StylesIcon /><span>Cell</span><Row>Styles <Caret /></Row></BigButton>
        </GroupBody>
        <GroupLabel><span>Styles</span></GroupLabel>
      </Group>
      <Group $w={119}>
        <GroupBody $pad={4}>
          <BigButton $w={37}><InsertIcon /><span>Insert</span><Drop /></BigButton>
          <BigButton $w={37}><DeleteIcon /><span>Delete</span><Drop /></BigButton>
          <BigButton $w={37}><FormatIcon /><span>Format</span><Drop /></BigButton>
        </GroupBody>
        <GroupLabel><span>Cells</span></GroupLabel>
      </Group>
      <Group $w={155}>
        <GroupBody $pad={7} $gap={2}>
          <Stack>
            <SmallButton><Slot $w={13}><Glyph $size={13}>Σ</Glyph></Slot>AutoSum <Caret /></SmallButton>
            <SmallButton><Slot $w={13}><FillIcon /></Slot>Fill <Caret /></SmallButton>
            <SmallButton><Slot $w={13}><EraserIcon /></Slot>Clear <Caret /></SmallButton>
          </Stack>
          <BigButton $w={38}><SortIcon /><span>Sort &amp;</span><Row>Filter <Caret /></Row></BigButton>
          <BigButton $w={34}><FindIcon /><span>Find &amp;</span><Row>Select <Caret /></Row></BigButton>
        </GroupBody>
        <GroupLabel><span>Editing</span></GroupLabel>
      </Group>
    </Ribbon>

    <FormulaBar>
      <NameBox><input aria-label="Name box" defaultValue="C12" /><Caret c="#222" s={6} /></NameBox>
      <FxZone>
        <svg width="9" height="9"><circle cx="4.500" cy="4.500" r="4" fill="#c3c7cd" stroke="#a9adb4" /></svg>
        <Glyph $i $size={13}>fx</Glyph>
      </FxZone>
      <FormulaInput aria-label="Formula" defaultValue="RINI" />
      <Expand aria-label="Expand formula bar"><svg width="8" height="6" fill="none" stroke="#333" strokeWidth="1.500"><path d="M1 1l3 3 3-3" /></svg></Expand>
    </FormulaBar>

    <SheetArea>
      <GridClip>
        <Grid>
          <colgroup>
            <col style={{ width: 23 }} />
            {columns.map(([name, w], i) => <col key={name + i} style={w ? { width: w } : undefined} />)}
          </colgroup>
          <thead>
            <tr>
              <Corner><svg width="10" height="10"><path d="M10 0v10H0z" fill="#b5bcc5" /></svg></Corner>
              {columns.map(([name], i) => <ColHead key={i} $on={name === 'C'}>{name}</ColHead>)}
            </tr>
          </thead>
          <tbody>
            <GridRow>
              <RowHead>1</RowHead>
              {headings.map((h, i) => <Cell key={i} $big $open={i === 11}>{h}</Cell>)}
            </GridRow>
            {people.map(([ktp, name], i) => {
              const n = i + 2;
              const Name = n === 12 ? ActiveCell : Cell;
              return (
                <GridRow key={n}>
                  <RowHead $on={n === 12}>{n}</RowHead>
                  <Cell>NELVIA SUTERA DEWI</Cell>
                  <Cell $flag $red={n === 6 || n === 16}>{ktp}</Cell>
                  <Name>{name}</Name>
                  <Cell $right>1501042014</Cell>
                  <Cell $code $right>374362</Cell>
                  <Cell>RT0000027144</Cell>
                  <Cell $loose>TANAMAN PANGAN</Cell>
                  <Cell $loose>PADI</Cell>
                  <Cell $right>0,5</Cell>
                  <Cell $right>100</Cell>
                  <Cell $right>150</Cell>
                  <Cell $flag $open>0</Cell>
                </GridRow>
              );
            })}
          </tbody>
        </Grid>
      </GridClip>
      <VScroll>
        <SplitHandle />
        <svg width="12" height="14"><path d="M2 9h8L6 4z" fill="#3c4046" /></svg>
        <VThumb><svg width="6" height="8" stroke="#8b9097"><path d="M0 .5h6M0 2.500h6M0 4.500h6M0 6.500h6" /></svg></VThumb>
        <Tri d="M0 1h7L3.500 6z" />
      </VScroll>
    </SheetArea>

    <SheetTabs>
      <NavButtons>
        <IconButton aria-label="First sheet"><Tri d="M0 0h1v7H0zM6 0v7L2 3.500z" /></IconButton>
        <IconButton aria-label="Previous sheet"><Tri d="M5 0v7L1 3.500z" /></IconButton>
        <IconButton aria-label="Next sheet"><Tri d="M1 0v7l4-3.500z" /></IconButton>
        <IconButton aria-label="Last sheet"><Tri d="M6 0h1v7H6zM1 0v7l4-3.500z" /></IconButton>
      </NavButtons>
      <SheetTab>Template</SheetTab>
      <IconButton aria-label="Insert worksheet">
        <svg width="42" height="14" fill="none"><path d="M0 14L10 0M27 14L38 0" stroke="#9fa4ab" /><path d="M13 4h9v7l-2 2h-7z" fill="#fff" stroke="#5a7fb8" /><path d="M12 1v6M9 4h6" stroke="#e09a2c" strokeWidth="2" /></svg>
      </IconButton>
      <HScroll>
        <SplitHandle $v />
        <Tri d="M5 0v7L1 3.500z" />
        <HTrack><HThumb><svg width="8" height="6" stroke="#8b9097"><path d="M.5 0v6M2.500 0v6M4.500 0v6M6.500 0v6" /></svg></HThumb></HTrack>
        <Tri d="M1 0v7l4-3.500z" />
        <SplitHandle $v />
      </HScroll>
    </SheetTabs>

    <StatusBar>
      <StatusItem $w={41}>Ready</StatusItem>
      <StatusItem $w={49}>Calculate</StatusItem>
      <VRule />
      <ViewTools>
        <ViewButton $on aria-label="Normal view"><svg width="12" height="10" fill="#fff" stroke="#5a5f66"><path d="M.5.5h11v9H.5zM4 0v10M8 0v10M0 3.500h12M0 6.500h12" /></svg></ViewButton>
        <ViewButton aria-label="Page layout view"><svg width="12" height="10" fill="#eee" stroke="#5a5f66"><path d="M.5.5h11v9H.5zM3.500 2.500h5v5h-5z" /></svg></ViewButton>
        <ViewButton aria-label="Page break view"><svg width="12" height="10" fill="#eee" stroke="#5a5f66"><path d="M.5.5h11v9H.5zM4.500.5v5h3v-5" /></svg></ViewButton>
        <Zoom>
          <span>100%</span>
          <IconButton type="button" aria-label="Zoom out"><svg width="14" height="14" fill="#f3f4f6" stroke="#5a5f66"><circle cx="7" cy="7" r="6.200" /><path d="M4 7h6" /></svg></IconButton>
          <ZoomRange type="range" aria-label="Zoom" defaultValue={50} />
          <IconButton type="button" aria-label="Zoom in"><svg width="14" height="14" fill="#f3f4f6" stroke="#5a5f66"><circle cx="7" cy="7" r="6.200" /><path d="M4 7h6M7 4v6" /></svg></IconButton>
        </Zoom>
      </ViewTools>
    </StatusBar>

    <TaskBar>
      <StartButton aria-label="Start"><svg width="14" height="14" viewBox="0 0 14 14" fill="#111"><path d="M0 2l6-1v5.700H0zM6.700.9L14 0v6.700H6.700zM0 7.400h6v5.700l-6-1zM6.700 7.400H14V14l-7.300-1z" /></svg></StartButton>
      <SearchBox>
        <svg width="16" height="16" fill="none" stroke="#222" strokeWidth="1.200"><circle cx="9.500" cy="6" r="4.500" /><path d="M6.300 9.300L1 14.500" /></svg>
        <input aria-label="Search" placeholder="Type here to search" />
      </SearchBox>
      <TaskButton aria-label="Task view"><svg width="16" height="14" fill="none" stroke="#222" strokeWidth="1.200"><path d="M1 3V1h9v2M1 11v2h9v-2M1.500 4.500h8v5h-8zM13.500 0v3M13.500 5v3M13.500 10v4" /></svg></TaskButton>
      <TaskButton aria-label="Edge">
        <svg width="22" height="22" viewBox="0 0 22 22"><circle cx="11" cy="11" r="10.500" fill="#1b7fd4" /><path d="M1 9C3-1 20-2 21.500 9c.3 4-3 5.500-6.500 5-2-.3-1-1.500-1-3 0-4-8-5-13-2z" fill="#4fd18b" /><path d="M1 9C3 1 12-1 17 3 12 2 4 4 1 9z" fill="#2fb9e0" /><path d="M7 12c0 6 6 8 11 5-4 6-15 4-15-3 0-4 5-6 8-5-2 0-4 1-4 3z" fill="#0d56a6" /><path d="M11 9c4 0 3 3 3 4 1 2 5 2 7 0-1 3-9 4-10 0-.5-2 0-3 0-4z" fill="#e6f1f8" /></svg>
      </TaskButton>
      <TaskButton aria-label="Mail"><svg width="22" height="20" viewBox="0 0 22 20"><path d="M0 7l11-7 11 7z" fill="#1664b3" /><path d="M3 6h16v7H3z" fill="#fff" /><path d="M0 7l11 6.500L22 7v13H0z" fill="#2fa7e6" /><path d="M0 20L15 11l7-4v13z" fill="#1b83d0" /></svg></TaskButton>
      <TaskButton $open aria-label="File Explorer"><svg width="19" height="18" viewBox="0 0 19 18"><path d="M0 1h8l1 2h9v13H0z" fill="#f1b93a" /><path d="M1 5h17v11H1z" fill="#fbd874" /><path d="M3 17v-6h13v6h-4v-3H7v3z" fill="#3a94d6" /></svg></TaskButton>
      <TaskButton aria-label="McAfee"><svg width="20" height="22" viewBox="0 0 20 22"><path d="M0 0l10 5 10-5v16l-10 6-10-6zM4.500 7v7l5.500 3.500 5.500-3.500V7L10 10z" fill="#c2202e" fillRule="evenodd" /></svg></TaskButton>
      <TaskButton aria-label="L app"><svg width="21" height="21"><rect width="21" height="21" fill="#12359c" /><path d="M8 5v10h6" stroke="#fff" strokeWidth="2.500" fill="none" /></svg></TaskButton>
      <TaskButton aria-label="Firefox"><svg width="21" height="21" viewBox="0 0 21 21"><circle cx="10.500" cy="11" r="9.500" fill="#f4642c" /><path d="M12 0c6 3 9 8 8 14-2-5-5-6-8-7-2-2-1-5 0-7z" fill="#fdbf2d" /><path d="M1 8c1-3 2-4 3-5l2 2c3-1 5 0 5 0L5 9z" fill="#fd8f2a" /><circle cx="11" cy="11.500" r="4.500" fill="#7443c9" /><path d="M5 9c3 0 4 1 6 1-1 3-4 2-4 4-2-1-3-3-2-5z" fill="#fda42c" /></svg></TaskButton>
      <TaskButton $open aria-label="Settings">
        <svg width="18" height="18" viewBox="0 0 18 18" fill="none" stroke="#3a3a3a"><circle cx="9" cy="9" r="5" strokeWidth="2" /><circle cx="9" cy="9" r="7" strokeWidth="2.500" strokeDasharray="2.400 3.100" /></svg>
      </TaskButton>
      <TaskButton $open aria-label="Remote desktop"><svg width="21" height="20" viewBox="0 0 21 20"><path d="M8 10l10 2-2 7-8-2z" fill="#8aa0c8" /><path d="M5 1l14 1-1 10L6 11z" fill="#3f74d0" /><path d="M1 3h15v6H2z" fill="#2c5cb8" /><path d="M2 4.500h11M3 7h11" stroke="#b6cdf5" /><path d="M6 12l13 1v3l-10 1z" fill="#1d3f88" /></svg></TaskButton>
      <TaskButton $open aria-label="Chrome">
        <svg width="23" height="23" viewBox="0 0 23 23"><circle cx="10.500" cy="10.500" r="10.500" fill="#e3b52f" /><path d="M1.500 5.500A10.500 10.500 0 0120 6H10.500L6 12z" fill="#d93a2f" /><path d="M1.500 5.500L6.500 13l4 2-2 6A10.500 10.500 0 011.500 5.500z" fill="#2d9d4c" /><circle cx="10.500" cy="10.500" r="5" fill="#fff" /><circle cx="10.500" cy="10.500" r="4" fill="#3c7de0" /><circle cx="16.500" cy="16.500" r="6" fill="#d3a070" /><path d="M12 14c1-4 8-4 9 0-3 1-6-1-9 0z" fill="#8a5a36" /></svg>
      </TaskButton>
      <TaskButton $open $active aria-label="Excel"><ExcelIcon s={20} /></TaskButton>
      <Battery>92%</Battery>
      <Tray>
        <Weather>
          <svg width="24" height="22" viewBox="0 0 24 22"><path d="M3 4l4 2 3-4 1 5 3 4-8 4 0-4-4-2 3-2z" fill="#f2ab2f" /><path d="M5 20c-5 0-5-6 0-6 1-6 10-6 11 0 6-1 7 6 1 6z" fill="#aac4ee" /><circle cx="17" cy="6" r="5.500" fill="#d12a20" /><path d="M15.500 4.500L17.500 3v6" stroke="#fff" fill="none" /></svg>
          18°C
        </Weather>
        <TrayIcons>
          <svg width="12" height="8" fill="none" stroke="#222" strokeWidth="1.200"><path d="M1 7l5-5 5 5" /></svg>
          <svg width="14" height="13" fill="none" stroke="#333"><path d="M1 12C2 5 7 1 13 1M4 12c1-4 4-7 9-7M7 12c1-2 3-4 6-4" /><circle cx="11.500" cy="11" r="1" fill="#333" /></svg>
          <svg width="12" height="14" fill="none" stroke="#222"><path d="M2 2c2-2 5-2 7 0M2 12c2 2 5 2 7 0" /><rect x="1.500" y="4" width="6.500" height="6" rx="1" strokeWidth="1.300" /><path d="M8 6l3-2v6L8 8" /></svg>
          <svg width="15" height="14" fill="none" stroke="#222"><path d="M1 2l12-1v8M1 2v9l7 1M4 8c0-4 5-4 6-1M10 4v3H7M4 9h4" /><circle cx="11" cy="10.500" r="3.300" fill="#f29b2c" stroke="none" /></svg>
          <svg width="14" height="10" fill="none" stroke="#222"><path d="M.5 1.500h11v7H.5z" /><path d="M2 3h7v4H2zM12 3.500h1v3h-1z" fill="#222" /></svg>
          <svg width="15" height="12" fill="none" stroke="#222"><path d="M1 4h2l3-3v10L3 8H1zM8 4c1 1 1 3 0 4M10 2.500c2 2 2 5 0 7" /><path d="M12 1c3 3 3 7 0 10" stroke="#aaa" /></svg>
          <svg width="15" height="13" fill="none" stroke="#222" strokeWidth="1.200"><path d="M4 10.500c-4 0-4-4-1-5C4 2 9 2 10 5c4 0 4 5.500 0 5.500zM2 1l11 11" /></svg>
        </TrayIcons>
        <Clock><span>22:35</span><span>25/10/2024</span></Clock>
        <IconButton aria-label="Notifications">
          <svg width="22" height="22" viewBox="0 0 22 22"><path d="M1 2h14v10H7l-3 3v-3H1z" fill="#1a1a1a" /><path d="M3 5h10M3 7.500h10" stroke="#ddd" /><circle cx="14.500" cy="14.500" r="6.500" fill="#d9dadb" stroke="#777" /><text x="14.500" y="18" textAnchor="middle" fontSize="9" fontWeight="700" fill="#222">4</text></svg>
        </IconButton>
      </Tray>
    </TaskBar>

    <Watermark><strong>Activate Windows</strong>Go to Settings to activate Windows.</Watermark>

    <Censor width="560" height="660" viewBox="0 0 560 660" aria-hidden="true">
      <defs>
        <filter id="soft" x="-10%" y="-5%" width="120%" height="110%"><feGaussianBlur stdDeviation="1.200" /></filter>
        {strokes.map(s => (
          <mask key={s.id} id={`mask-${s.id}`} maskUnits="userSpaceOnUse" x="0" y="0" width="560" height="660">
            <path d={s.path} fill="#fff" filter="url(#soft)" />
          </mask>
        ))}
      </defs>
      {strokes.map(s => (
        <g key={s.id} mask={`url(#mask-${s.id})`} shapeRendering="crispEdges">
          {s.tiles.map((row, i) => row.map((c, j) => (
            <rect key={`${i}-${j}`} x={s.x[j]} y={bandTop(i)} width={s.x[j + 1] - s.x[j]} height={bandTop(i + 1) - bandTop(i)} fill={c} opacity={i < 2 ? 0.85 : 0.99} />
          )))}
        </g>
      ))}
    </Censor>
  </Page>
);

export default App;
